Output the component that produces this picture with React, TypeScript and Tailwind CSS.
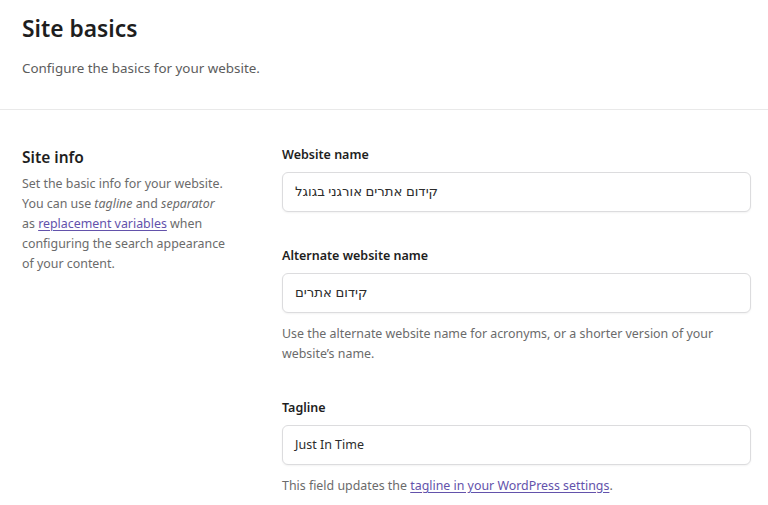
import React from 'react';

const font = { fontFamily: '"Noto Sans", "DejaVu Sans", sans-serif' };

const Field: React.FC<{ label: string; value: string; hebrew?: boolean; help?: React.ReactNode }> = ({ label, value, hebrew, help }) => (
  <div>
    <label className="block text-[12.5px] leading-5 font-semibold text-[#1e1e1e] mb-[7px]">{label}</label>
    <div
      className={`h-10 w-full rounded-md border border-[#dcdcde] bg-white shadow-[0_1px_2px_rgba(0,0,0,0.05)] flex items-center px-3 text-[#2c2c2c] ${hebrew ? 'text-[13.3px]' : 'text-[12.5px]'}`}
    >
      {value}
    </div>
    {help && <p className="mt-[11px] text-[12.4px] leading-5 text-[#6b6b6b]">{help}</p>}
  </div>
);

const App: React.FC = () => {
  return (
    <div className="min-h-screen bg-white" style={font}>
      <div className="px-[22px] pt-[13px] pb-[31px] border-b border-[#e9e9e9]">
        <h1 className="text-[22.8px] leading-8 font-semibold text-[#1e1e1e]">Site basics</h1>
        <p className="mt-[13px] text-[13.4px] leading-5 text-[#5c5c5c]">Configure the basics for your website.</p>
      </div>
      <div className="flex pl-[22px] pr-[17px] pt-[35px]">
        <div className="w-[260px] shrink-0">
          <h2 className="text-[15.5px] leading-6 font-semibold text-[#1e1e1e] mb-[5px]">Site info</h2>
          <p className="w-[205px] text-[12.4px] leading-5 text-[#6b6b6b]">
            Set the basic info for your website. You can use <em>tagline</em> and <em>separator</em> as{' '}
            <a href="#" className="text-[#6352ab] underline underline-offset-2">replacement variables</a> when configuring the search appearance of your content.
          </p>
        </div>
        <div className="flex-1 flex flex-col gap-[34px]">
          <Field label="Website name" value="קידום אתרים אורגני בגוגל" hebrew />
          <Field
            label="Alternate website name"
            value="קידום אתרים"
            hebrew
            help="Use the alternate website name for acronyms, or a shorter version of your website’s name."
          />
          <Field
            label="Tagline"
            value="Just In Time"
            help={
              <>
                This field updates the{' '}
                <a href="#" className="text-[#6352ab] underline underline-offset-2">tagline in your WordPress settings</a>.
              </>
            }
          />
        </div>
      </div>
    </div>
  );
};

export default App;
